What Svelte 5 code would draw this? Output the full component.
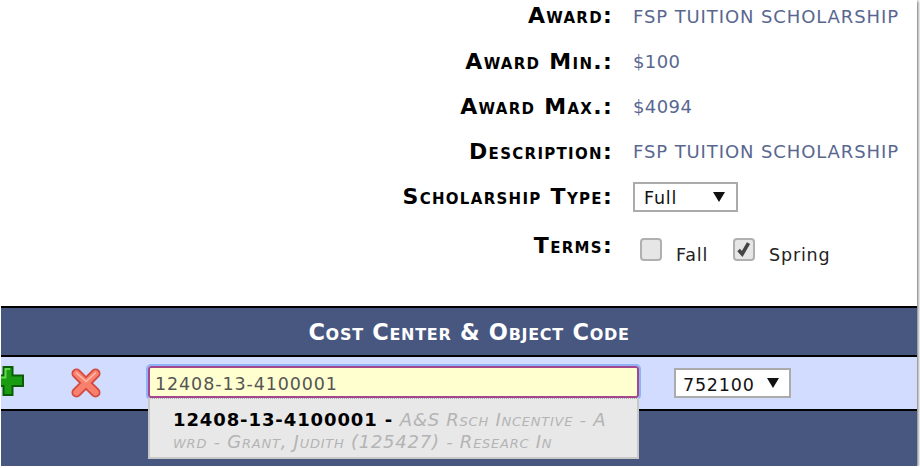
<script>
  const fields = [
    { label: 'Award:', value: 'FSP TUITION SCHOLARSHIP' },
    { label: 'Award Min.:', value: '$100', num: true },
    { label: 'Award Max.:', value: '$4094', num: true },
    { label: 'Description:', value: 'FSP TUITION SCHOLARSHIP' },
  ]
</script>

<div class="page">
  <div class="form">
    {#each fields as f (f.label)}
      <div class="row">
        <span class="lbl">{f.label}</span>
        <span class="val" class:num={f.num}>{f.value}</span>
      </div>
    {/each}

    <div class="row">
      <span class="lbl">Scholarship Type:</span>
      <div class="sel sel-type"><span>Full</span><i class="arrow"></i></div>
    </div>

    <div class="row row-terms">
      <span class="lbl">Terms:</span>
      <div class="terms">
        <span class="box"></span><span class="term term-fall">Fall</span>
        <span class="box">
          <svg viewBox="0 0 20 20" width="18" height="19"><path d="M4 10.500l4 4.500L15 3" fill="none" stroke="#444" stroke-width="4"/></svg>
        </span><span class="term">Spring</span>
      </div>
    </div>
  </div>

  <div class="band">
    <div class="band-title">Cost Center &amp; Object Code</div>
    <div class="code-row">
      <svg class="ico-add" viewBox="0 0 23 30" width="23" height="30">
        <path d="M-4 9.500H2.500V1H11.500V9.500H22V20H11.500V29H2.500V20H-4z" fill="#1a9c12" stroke="#0a5c06" stroke-width="2"/>
        <path d="M-2 11.500H4.500V3H9" fill="none" stroke="#63d84f" stroke-width="2"/>
      </svg>
      <svg class="ico-del" viewBox="0 0 30 30" width="30" height="30">
        <path d="M5.500 5.500L24.500 24.500M24.500 5.500L5.500 24.500" fill="none" stroke="#d2493f" stroke-width="10" stroke-linecap="round"/>
        <path d="M5.500 5.500L24.500 24.500M24.500 5.500L5.500 24.500" fill="none" stroke="#f9806c" stroke-width="6.500" stroke-linecap="round"/>
        <path d="M5 4.500L15 13.500L25 4.500" fill="none" stroke="#fdbcae" stroke-width="1.500"/>
      </svg>
      <div class="combo">
        <div class="code-input">12408-13-4100001</div>
        <div class="suggest">
          <b>12408-13-4100001 -</b> <em>A&amp;S Rsch Incentive - A<br>wrd - Grant, Judith (125427) - Researc In</em>
        </div>
      </div>
      <div class="sel sel-obj"><span>752100</span><i class="arrow"></i></div>
    </div>
    <div class="band-foot"></div>
  </div>
</div>

<style>
  :global(body) {
    margin: 0;
    background: #fff;
    font-family: "DejaVu Sans", Verdana, sans-serif;
  }

  .page {
    width: 917px;
    height: 466px;
    display: flex;
    flex-direction: column;
    background: #fff;
    box-shadow: 1px 1px 3px #666;
    overflow: hidden;
  }

  .form { height: 306px; flex: none; }

  .row {
    display: grid;
    grid-template-columns: 613px 1fr;
    column-gap: 20px;
    align-items: center;
    box-sizing: border-box;
    height: 45px;
  }
  .row:first-child { height: 39px; padding-bottom: 7px; }
  .row-terms { align-items: start; padding-top: 15px; height: auto; }

  .lbl {
    text-align: right;
    font-size: 22px;
    letter-spacing: 1.300px;
    font-weight: 700;
    font-variant: small-caps;
    color: #000;
    white-space: nowrap;
    line-height: 24px;
  }

  .val {
    font-size: 18px;
    letter-spacing: .9px;
    color: #59678f;
    white-space: nowrap;
  }
  .val.num { letter-spacing: .4px; }

  .sel {
    display: flex;
    align-items: center;
    justify-content: space-between;
    box-sizing: border-box;
    height: 30px;
    background: #fff;
    border: 2px solid #ababab;
    font-size: 17.500px;
    letter-spacing: .8px;
    color: #111;
  }
  .sel span { padding-top: 3px; }
  .sel-type { width: 105px; padding: 0 11px 0 9px; }
  .sel-obj { width: 117px; padding: 0 10px 0 7px; margin-left: 35px; }

  .arrow {
    width: 0;
    height: 0;
    border-left: 6px solid transparent;
    border-right: 6px solid transparent;
    border-top: 10px solid #111;
  }

  .terms {
    display: flex;
    align-items: flex-start;
    font-size: 17.500px;
    letter-spacing: .8px;
    color: #222;
    padding-left: 7px;
    margin-top: 4px;
  }

  .box {
    box-sizing: border-box;
    width: 22px;
    height: 23px;
    border: 2px solid #b0b0b0;
    border-radius: 4px;
    background: #e6e6e6;
    flex: none;
  }
  .box svg { display: block; }

  .term { margin: 7px 0 0 14px; }
  .term-fall { margin-right: 25px; }

  .band {
    flex: 1;
    display: flex;
    flex-direction: column;
    margin-left: 1px;
    background: #47577f;
    border-top: 2px solid #000;
  }

  .band-title {
    height: 47px;
    line-height: 48px;
    padding-left: 20px;
    box-sizing: border-box;
    text-align: center;
    font-size: 22.500px;
    letter-spacing: .7px;
    font-weight: 700;
    font-variant: small-caps;
    color: #fff;
    white-space: nowrap;
  }

  .code-row {
    height: 52px;
    display: flex;
    align-items: center;
    background: #d1dcfe;
    border-top: 2px solid #000;
    border-bottom: 2px solid #000;
  }

  .ico-add { flex: none; margin-top: -4px; }
  .ico-del { flex: none; margin-left: 47px; }

  .combo {
    position: relative;
    margin: -2px 0 0 47px;
    width: 491px;
  }

  .code-input {
    box-sizing: border-box;
    height: 32px;
    line-height: 32px;
    padding-left: 5px;
    background: #ffffcf;
    border: 2px solid #a5478f;
    border-radius: 3px;
    outline: 2px solid #90b2f6;
    font-size: 17.500px;
    letter-spacing: .9px;
    color: #555;
  }

  .suggest {
    position: absolute;
    left: 0;
    right: 0;
    top: 32px;
    box-sizing: border-box;
    height: 61px;
    padding: 10px 0 0 23px;
    background: #e8e8e8;
    border-top: 1px dotted #aaa;
    border-right: 2px solid #c8c8c8;
    border-bottom: 2px solid #c8c8c8;
    border-left: 2px solid #c8c8c8;
    font-size: 18px;
    line-height: 22px;
    letter-spacing: .9px;
    white-space: nowrap;
  }
  .suggest b { color: #000; }
  .suggest em {
    color: #b4b4b4;
    font-variant: small-caps;
    letter-spacing: .75px;
  }

  .band-foot { flex: 1; }
</style>
